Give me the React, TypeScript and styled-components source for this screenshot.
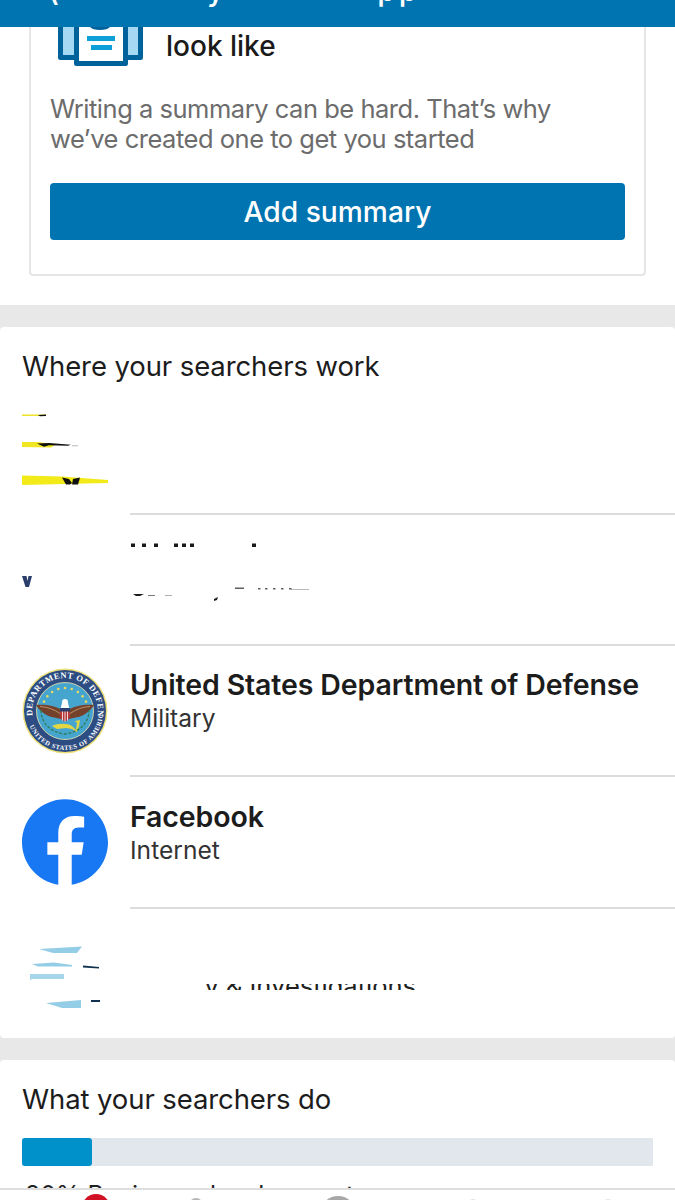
import React from "react";
import styled, { createGlobalStyle } from "styled-components";

const Global = createGlobalStyle`
  html, body { margin: 0; padding: 0; background: #fff; }
  * { box-sizing: border-box; }
`;

const FONT = `Inter, "Liberation Sans", Arial, sans-serif`;

const Page = styled.div`
  width: 675px;
  height: 1200px;
  display: flex;
  flex-direction: column;
  overflow: hidden;
  background: #e8e8e8;
  font-family: ${FONT};
  color: #1c1c1c;
`;

const TopBar = styled.header`
  height: 27px;
  flex: none;
  background: #0073b1;
  overflow: hidden;
  display: flex;
  align-items: flex-end;
  padding-left: 48px;
  color: #fff;
`;

const TitleGlyph = styled.span<{ $gap: number }>`
  margin-left: ${(p) => p.$gap}px;
  font-size: 30px;
  font-weight: 500;
  line-height: 30px;
  margin-bottom: 22px;
  letter-spacing: 3px;
  white-space: pre;
`;

const Scroll = styled.main`
  flex: 1;
  min-height: 0;
  overflow: hidden;
  display: flex;
  flex-direction: column;
  gap: 22px;
`;

const TopPanel = styled.section`
  flex: none;
  height: 278px;
  background: #fff;
  padding: 0 29px;
`;

const SummaryCard = styled.div`
  height: 249px;
  border: 2px solid #e6e6e6;
  border-top: none;
  border-radius: 0 0 4px 4px;
  padding: 0 20px;
`;

const CardHead = styled.div`
  display: flex;
  align-items: center;
  gap: 23px;
  height: 39px;
  margin-left: 7px;
`;

const HeadText = styled.div`
  font-size: 28px;
  font-weight: 500;
  line-height: 36px;
  margin-top: -2px;
  color: #1a1a1a;
`;

const CardBody = styled.p`
  margin: 28px 0 29px -1px;
  font-size: 25.5px;
  line-height: 30px;
  font-weight: 400;
  letter-spacing: -0.48px;
  color: #6c6c6c;
`;

const Primary = styled.button`
  display: block;
  width: 575px;
  margin-left: -1px;
  height: 57px;
  border: none;
  border-radius: 4px;
  background: #0073b1;
  color: #fff;
  font-family: ${FONT};
  font-size: 28.2px;
  font-weight: 500;
`;

const ListCard = styled.section`
  flex: none;
  height: 711px;
  background: #fff;
  border-radius: 4px;
`;

const Heading = styled.h2`
  margin: 0;
  padding-left: 22px;
  height: 57px;
  padding-top: 20px;
  font-size: 27.5px;
  line-height: 38px;
  font-weight: 400;
  letter-spacing: -0.1px;
  color: #1c1c1c;
  white-space: nowrap;
`;

const Row = styled.div<{ $h: number }>`
  height: ${(p) => p.$h}px;
  display: flex;
  align-items: center;
  padding-left: 22px;
  gap: 22px;
`;

const LogoSlot = styled.div`
  width: 86px;
  height: 86px;
  flex: none;
  margin-top: -2px;
  svg { display: block; overflow: visible; }
`;

const RowBody = styled.div<{ $line: boolean }>`
  flex: 1;
  align-self: stretch;
  display: flex;
  flex-direction: column;
  justify-content: center;
  border-bottom: ${(p) => (p.$line ? "2px solid #dcdcdc" : "none")};
  min-width: 0;
`;

const RowTitle = styled.div`
  font-size: 28.5px;
  line-height: 34px;
  font-weight: 600;
  letter-spacing: -0.12px;
  color: #1c1c1c;
  white-space: nowrap;
  margin-top: -19px;
`;

const RowSub = styled.div`
  font-size: 24.6px;
  line-height: 32px;
  font-weight: 400;
  color: #333;
`;

const Slice = styled.div`
  height: 6px;
  overflow: hidden;
  margin: 26px 0 0 -33px;
  font-size: 25.5px;
  line-height: 4px;
  white-space: pre;
  color: #202020;
`;

const Ghost = styled.span`
  color: transparent;
`;

const StatsCard = styled.section`
  flex: 1;
  min-height: 0;
  background: #fff;
  overflow: hidden;
  border-radius: 4px 4px 0 0;
`;

const Track = styled.div`
  margin: 21px 22px 0;
  height: 28px;
  background: #e1e7ec;
`;

const Fill = styled.div`
  height: 100%;
  background: #0091ca;
  border-radius: 3px;
`;

const StatLabel = styled.div`
  margin: 14px 0 0 25px;
  font-size: 25px;
  line-height: 30px;
  color: #222;
  white-space: nowrap;
`;

const BottomNav = styled.nav`
  flex: none;
  height: 12px;
  overflow: hidden;
  background: #fff;
  border-top: 2px solid #dedede;
  display: grid;
  grid-template-columns: repeat(5, 135px);
`;

const Tab = styled.div`
  position: relative;
  display: flex;
  justify-content: center;
`;

const TabIcon = styled.div<{ $size: number; $top: number; $shade: string; $nudge?: number }>`
  width: ${(p) => p.$size}px;
  height: ${(p) => p.$size}px;
  margin-top: ${(p) => p.$top}px;
  margin-right: ${(p) => p.$nudge ?? 0}px;
  border-radius: 50%;
  background: ${(p) => p.$shade};
`;

const Badge = styled.div`
  position: absolute;
  left: 82px;
  top: 4px;
  width: 28px;
  height: 28px;
  border-radius: 50%;
  background: #d11124;
`;

const SummaryIcon = () => (
  <svg width="85" height="39" viewBox="58 27 85 39" aria-hidden="true">
    <path d="M60.500 20v37.500h80V20" fill="#a5d8f3" stroke="#00629b" strokeWidth="5" strokeLinejoin="round" />
    <path d="M76.500 20v43.500h49V20" fill="#fff" stroke="#00629b" strokeWidth="5" strokeLinejoin="round" />
    <path d="M90 27h20c-1.500 2-5 3-10 3s-8.500-1-10-3z" fill="#00629b" />
    <rect x="87" y="36" width="28" height="5" fill="#0f9fd8" />
    <rect x="91" y="45" width="21" height="5" fill="#0f9fd8" />
  </svg>
);

const Logo1 = () => (
  <svg width="86" height="86" viewBox="22 405.500 86 86" aria-hidden="true">
    <path d="M22 414h24v1.500H22z" fill="#ece32a" />
    <path d="M38 414.500l8-.500v1.500l-6 .3z" fill="#111" />
    <path d="M22 441.500h16l18 2.500-5 3-29-.5z" fill="#f0e621" />
    <path d="M37 443l12-.500 22 1.800-3 1-19-.5-5 1.500z" fill="#111" />
    <path d="M72 445h6v.7h-6z" fill="#999" />
    <path d="M22 475l40 1 46 3.500v3l-86 2z" fill="#f3ea1a" />
    <path d="M62 477l7 1.500 3 4-2 1.500h-4z" fill="#111" />
    <path d="M80 477l-7 1.500-1 5.500h6z" fill="#111" />
  </svg>
);

const Logo2 = () => (
  <svg width="86" height="86" viewBox="22 536.500 86 86" aria-hidden="true">
    <path d="M22 575.500h4.500l1 5 1-5h3.500l-3 11h-3.500z" fill="#2a3f6b" />
  </svg>
);

const Logo5 = () => (
  <svg width="86" height="86" viewBox="22 930 86 86" aria-hidden="true">
    <path d="M39 949l43-2.500-5 6.500H53z" fill="#94cde6" />
    <path d="M32 964l22-1.500 18 2.500v1.500H38z" fill="#94cde6" />
    <path d="M30 974h34v5H32l-2 1.500z" fill="#a5d6ea" />
    <path d="M46 1003l35-3v8H62z" fill="#94cde6" />
    <path d="M83 965.500l16 1.500v1.500l-16-1z" fill="#10324f" />
    <path d="M91 1000h9v2h-9z" fill="#10324f" />
  </svg>
);

const DodSeal = () => (
  <svg width="86" height="86" viewBox="0 0 86 86" role="img" aria-label="United States Department of Defense seal">
    <defs>
      <path id="arcTop" d="M11 50a32.800 32.800 0 1 1 64 0" />
      <path id="arcBottom" d="M5 44a38 38 0 0 0 76 0" />
    </defs>
    <circle cx="43" cy="43" r="42.500" fill="#eee07a" />
    <circle cx="43" cy="43" r="41" fill="#2c4c82" />
    <circle cx="43" cy="43" r="28.500" fill="#46a5cf" stroke="#f2e9b0" strokeWidth="0.8" />
    <text fontFamily="Liberation Serif, serif" fontSize="8.500" fontWeight="700" fill="#fff" letterSpacing="0.5">
      <textPath href="#arcTop" startOffset="2%">DEPARTMENT OF DEFENSE</textPath>
    </text>
    <text fontFamily="Liberation Serif, serif" fontSize="6.500" fontWeight="700" fill="#fff" letterSpacing="0.6">
      <textPath href="#arcBottom" startOffset="12%">UNITED STATES OF AMERICA</textPath>
    </text>
    <g fill="#e9dc5d">
      {[-66, -50, -34, -17, 0, 17, 34, 50, 66].map((a) => (
        <circle key={a} cx={43 + 23 * Math.sin((a * Math.PI) / 180)} cy={43 - 23 * Math.cos((a * Math.PI) / 180)} r="1.300" />
      ))}
    </g>
    <path d="M43 44c-8-6-18-8-29-7 4 6 9 10 16 12l9 2z" fill="#74412a" />
    <path d="M43 44c8-6 18-8 29-7-4 6-9 10-16 12l-9 2z" fill="#74412a" />
    <path d="M18 38.500c8 .5 14 3 20 7M68 38.500c-8 .5-14 3-20 7" stroke="#c19a70" strokeWidth="0.9" fill="none" />
    <circle cx="43" cy="34" r="3" fill="#fff" />
    <path d="M40 35h6l1.500 6h-9z" fill="#fff" />
    <path d="M38 40h10v8c0 3-2.500 4.500-5 5.500-2.500-1-5-2.500-5-5.500z" fill="#b53a3a" />
    <path d="M38 40h10v3.500H38z" fill="#27406f" />
    <path d="M40.500 43.500v9M43 43.500v10M45.500 43.500v9" stroke="#fff" strokeWidth="0.8" />
    <path d="M30 58c5-3 16-3 20 0l4 4 1-7-2-2 5-1-1 6-2 6-5-3-6-1-9 1z" fill="#e2d743" />
    <path d="M19 42c0 12 8 22 24 24 16-2 24-12 24-24" fill="none" stroke="#2e7f52" strokeWidth="1.300" strokeDasharray="3 1.500" />
  </svg>
);

const FacebookLogo = () => (
  <svg width="86" height="86" viewBox="0 0 24 24" role="img" aria-label="Facebook">
    <circle cx="12" cy="12" r="11.800" fill="#fff" />
    <path
      fill="#1877f2"
      d="M24 12.073c0-6.627-5.373-12-12-12s-12 5.373-12 12c0 5.990 4.388 10.954 10.125 11.854v-8.385H7.078v-3.470h3.047V9.430c0-3.007 1.792-4.669 4.533-4.669 1.312 0 2.686.235 2.686.235v2.953H15.830c-1.491 0-1.956.925-1.956 1.874v2.250h3.328l-.532 3.470h-2.796v8.385C19.612 23.027 24 18.062 24 12.073z"
    />
  </svg>
);

const RedactedMarks = () => (
  <svg width="200" height="83" viewBox="130 538 200 83" aria-hidden="true">
    <g fill="#1a1a1a">
      {[131, 142, 154, 174, 182, 190, 252].map((x) => (
        <rect key={x} x={x} y="543.500" width="4" height="3.500" />
      ))}
      <path d="M133 594h11l-4 2h-4z" />
      <path d="M148 595h7v1h-7z" opacity="0.6" />
      <path d="M165 595h7v1h-7z" opacity="0.35" />
      <path d="M214 599l4-2-1 3-3 1z" />
      <path d="M235 587.500h9v1.500h-9z" opacity="0.7" />
      {[258, 265, 273, 281, 289].map((x) => (
        <rect key={x} x={x} y="588" width="2.500" height="1.500" opacity="0.7" />
      ))}
      <path d="M291 589h18v1h-18z" opacity="0.3" />
    </g>
  </svg>
);

export default function App() {
  return (
    <Page>
      <Global />
      <TopBar>
        <TitleGlyph $gap={0}>(</TitleGlyph>
        <TitleGlyph $gap={145}>y</TitleGlyph>
        <TitleGlyph $gap={150}>pp</TitleGlyph>
      </TopBar>
      <Scroll>
        <TopPanel>
          <SummaryCard>
            <CardHead>
              <SummaryIcon />
              <HeadText>look like</HeadText>
            </CardHead>
            <CardBody>
              Writing a summary can be hard. That’s why
              <br />
              we’ve created one to get you started
            </CardBody>
            <Primary>Add summary</Primary>
          </SummaryCard>
        </TopPanel>

        <ListCard>
          <Heading>Where your searchers work</Heading>
          <Row $h={131}>
            <LogoSlot><Logo1 /></LogoSlot>
            <RowBody $line />
          </Row>
          <Row $h={131}>
            <LogoSlot><Logo2 /></LogoSlot>
            <RowBody $line><RedactedMarks /></RowBody>
          </Row>
          <Row $h={131}>
            <LogoSlot><DodSeal /></LogoSlot>
            <RowBody $line>
              <RowTitle>United States Department of Defense</RowTitle>
              <RowSub>Military</RowSub>
            </RowBody>
          </Row>
          <Row $h={132}>
            <LogoSlot><FacebookLogo /></LogoSlot>
            <RowBody $line>
              <RowTitle>Facebook</RowTitle>
              <RowSub>Internet</RowSub>
            </RowBody>
          </Row>
          <Row $h={129}>
            <LogoSlot><Logo5 /></LogoSlot>
            <RowBody $line={false}>
              <Slice><Ghost>Security </Ghost>y &amp; Investigations</Slice>
            </RowBody>
          </Row>
        </ListCard>

        <StatsCard>
          <Heading>What your searchers do</Heading>
          <Track>
            <Fill style={{ width: `${(70 / 631) * 100}%` }} />
          </Track>
          <StatLabel>20% Business development</StatLabel>
        </StatsCard>
      </Scroll>
      <BottomNav>
        <Tab>
          <Badge />
        </Tab>
        <Tab><TabIcon $size={14} $top={8} $shade="#b5b5b5" $nudge={14} /></Tab>
        <Tab><TabIcon $size={36} $top={6} $shade="#a8a8a8" /></Tab>
        <Tab><TabIcon $size={12} $top={9} $shade="#e4e4e4" /></Tab>
        <Tab><TabIcon $size={12} $top={9} $shade="#e4e4e4" /></Tab>
      </BottomNav>
    </Page>
  );
}
